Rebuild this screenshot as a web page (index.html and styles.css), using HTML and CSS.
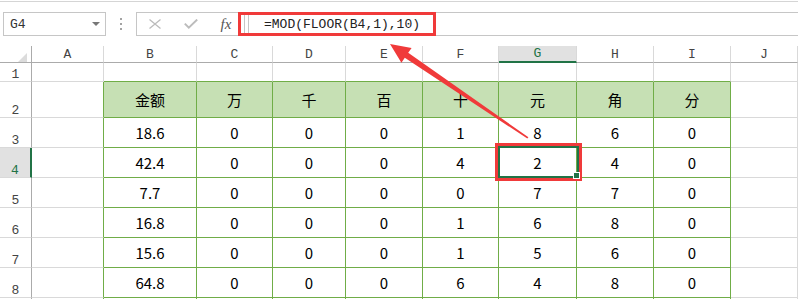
FILE: index.html
```html
<!DOCTYPE html>
<html lang="zh-CN">
<head>
    <meta charset="UTF-8">
    <title>MOD FLOOR</title>
    <link rel="stylesheet" href="styles.css">
</head>
<body>
    <div class="toolbar">
        <div class="namebox"><span>G4</span><i class="caret"></i></div>
        <div class="grip"><i></i><i></i><i></i></div>
        <div class="formula">
            <span class="fbtn">
                <svg width="12" height="10" viewBox="0 0 12 10"><path d="M0.5 0.5L11.5 9.5M11.5 0.5L0.5 9.5" stroke="#bcbcbc" stroke-width="1.3" fill="none"/></svg>
            </span>
            <span class="fbtn">
                <svg width="14" height="10" viewBox="0 0 14 10"><path d="M0.8 4.6L4.8 8.6L13.2 0.6" stroke="#bcbcbc" stroke-width="2" fill="none"/></svg>
            </span>
            <span class="fbtn fx">fx</span>
            <span class="fsep"></span>
            <span class="ftext">=MOD(FLOOR(B4,1),10)</span>
        </div>
    </div>

    <div class="sheet">
        <div class="c corner"></div>
        <div class="c ch">A</div><div class="c ch">B</div><div class="c ch">C</div><div class="c ch">D</div><div class="c ch">E</div>
        <div class="c ch">F</div><div class="c ch sel">G</div><div class="c ch">H</div><div class="c ch">I</div><div class="c ch">J</div>

        <div class="c rh">1</div><div class="c"></div>
        <div class="c top"></div><div class="c top"></div><div class="c top"></div><div class="c top"></div>
        <div class="c top"></div><div class="c top"></div><div class="c top"></div><div class="c top"></div><div class="c"></div>

        <div class="c rh">2</div><div class="c side"></div>
        <div class="c tb th">金额</div><div class="c tb th">万</div><div class="c tb th">千</div><div class="c tb th">百</div>
        <div class="c tb th">十</div><div class="c tb th">元</div><div class="c tb th">角</div><div class="c tb th">分</div><div class="c"></div>

        <div class="c rh">3</div><div class="c side"></div>
        <div class="c tb">18.6</div><div class="c tb">0</div><div class="c tb">0</div><div class="c tb">0</div>
        <div class="c tb">1</div><div class="c tb">8</div><div class="c tb">6</div><div class="c tb">0</div><div class="c"></div>

        <div class="c rh sel">4</div><div class="c side"></div>
        <div class="c tb">42.4</div><div class="c tb">0</div><div class="c tb">0</div><div class="c tb">0</div>
        <div class="c tb">4</div><div class="c tb active">2</div><div class="c tb">4</div><div class="c tb">0</div><div class="c"></div>

        <div class="c rh">5</div><div class="c side"></div>
        <div class="c tb">7.7</div><div class="c tb">0</div><div class="c tb">0</div><div class="c tb">0</div>
        <div class="c tb">0</div><div class="c tb">7</div><div class="c tb">7</div><div class="c tb">0</div><div class="c"></div>

        <div class="c rh">6</div><div class="c side"></div>
        <div class="c tb">16.8</div><div class="c tb">0</div><div class="c tb">0</div><div class="c tb">0</div>
        <div class="c tb">1</div><div class="c tb">6</div><div class="c tb">8</div><div class="c tb">0</div><div class="c"></div>

        <div class="c rh">7</div><div class="c side"></div>
        <div class="c tb">15.6</div><div class="c tb">0</div><div class="c tb">0</div><div class="c tb">0</div>
        <div class="c tb">1</div><div class="c tb">5</div><div class="c tb">6</div><div class="c tb">0</div><div class="c"></div>

        <div class="c rh">8</div><div class="c side"></div>
        <div class="c tb">64.8</div><div class="c tb">0</div><div class="c tb">0</div><div class="c tb">0</div>
        <div class="c tb">6</div><div class="c tb">4</div><div class="c tb">8</div><div class="c tb">0</div><div class="c"></div>

        <!-- next row, only its top edge shows -->
        <div class="c rh"></div><div class="c side"></div>
        <div class="c tb"></div><div class="c tb"></div><div class="c tb"></div><div class="c tb"></div>
        <div class="c tb"></div><div class="c tb"></div><div class="c tb"></div><div class="c tb"></div><div class="c"></div>
    </div>

    <!-- annotations drawn over the sheet -->
    <div class="mark mark-formula"></div>
    <div class="mark mark-cell"></div>
    <svg class="arrow" width="798" height="299" viewBox="0 0 798 299">
        <polygon points="390,44 401.4,62.7 404.8,57.8 527.3,138.6 528.4,137.2 408.2,52.8 411.6,47.9" fill="#f03a3a"/>
    </svg>
</body>
</html>
```

FILE: styles.css
```css
body{
    margin: 0;
    width: 798px;
    height: 299px;
    overflow: hidden;
    background: #fff;
    position: relative;
}

/* formula bar */
.toolbar{
    display: flex;
    align-items: center;
    margin-top: 1px;
    border-top: 1px solid #d5d5d5;
    padding: 10px 0 10px 3px;
}
.namebox{
    box-sizing: border-box;
    width: 103px;
    height: 24px;
    border: 1px solid #c6c6c6;
    display: flex;
    align-items: center;
    justify-content: space-between;
    padding: 0 5px 0 6px;
    font: 13px "Liberation Mono", monospace;
    color: #333;
}
.caret{
    width: 0;
    height: 0;
    border-left: 4px solid transparent;
    border-right: 4px solid transparent;
    border-top: 4px solid #777;
}
.grip{
    width: 30px;
    display: flex;
    flex-direction: column;
    align-items: center;
    gap: 3px;
}
.grip i{
    width: 2px;
    height: 2px;
    background: #a3a3a3;
}
.formula{
    flex: 1;
    box-sizing: border-box;
    height: 24px;
    border: 1px solid #c6c6c6;
    border-right: none;
    display: flex;
    align-items: center;
}
.fbtn{
    width: 36px;
    display: flex;
    justify-content: center;
    align-items: center;
}
.fx{
    width: 34px;
    font: italic 15px "Liberation Serif", serif;
    color: #555;
}
.fsep{
    width: 3px;
    height: 22px;
    border-left: 1px solid #c6c6c6;
    border-right: 1px solid #c6c6c6;
    margin-left: 1px;
}
.ftext{
    padding-left: 15px;
    font: 13px "Liberation Mono", monospace;
    color: #222;
}

/* sheet grid */
.sheet{
    display: grid;
    grid-template-columns: 32px 72px 93px 76px 73px 77px 76px 78px 77px 77px 1fr;
    grid-template-rows: 17px 19px 36px repeat(6, 30px) 3px;
}
.c{
    box-sizing: border-box;
    border-right: 1px solid #d9d9d9;
    border-bottom: 1px solid #d9d9d9;
    display: flex;
    align-items: center;
    justify-content: center;
    font: 15px "Noto Sans CJK SC", sans-serif;
    color: #000;
    line-height: 1;
    min-width: 0;
}
.corner{
    position: relative;
    border-right-color: #ababab;
    border-bottom-color: #ababab;
}
.corner::after{
    content: "";
    position: absolute;
    right: 4px;
    bottom: 0;
    border-left: 9px solid transparent;
    border-bottom: 9px solid #dcdcdc;
}
.ch{
    font: 13px "Liberation Mono", monospace;
    color: #444;
    border-bottom-color: #ababab;
}
.ch.sel{
    background: #e1e1e1;
    color: #217346;
    border-bottom: 2px solid #217346;
}
.rh{
    align-items: flex-end;
    font: 13px "Liberation Mono", monospace;
    line-height: 13px;
    color: #444;
    border-right-color: #ababab;
}
.rh.sel{
    background: #e1e1e1;
    color: #217346;
    border-right: 2px solid #217346;
}
.side{
    border-right-color: #70ad47;
}
.top{
    border-bottom-color: #70ad47;
}
.tb{
    border-right-color: #70ad47;
    border-bottom-color: #70ad47;
}
.th{
    background: #c6e0b4;
}
.active{
    position: relative;
}
.active::after{
    content: "";
    position: absolute;
    top: -2px;
    left: -1px;
    right: -3px;
    bottom: -1px;
    border: 2px solid #217346;
}
.active::before{
    content: "";
    position: absolute;
    right: -4px;
    bottom: -2px;
    width: 5px;
    height: 5px;
    background: #217346;
    border: 1px solid #fff;
    z-index: 1;
}

/* red annotations */
.mark{
    position: absolute;
    box-sizing: border-box;
    border: 3px solid #f03a3a;
}
.mark-formula{
    left: 238px;
    top: 12px;
    width: 198px;
    height: 24px;
}
.mark-cell{
    left: 495px;
    top: 143px;
    width: 87px;
    height: 38px;
}
.arrow{
    position: absolute;
    left: 0;
    top: 0;
}
```
